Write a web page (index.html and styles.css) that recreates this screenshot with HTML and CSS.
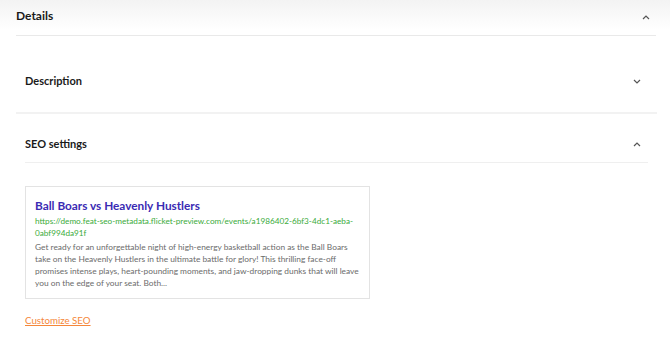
FILE: index.html
```html
<!DOCTYPE html>
<html>
<head>
  <meta charset="utf-8">
  <link rel="stylesheet" href="styles.css">
</head>
<body>
  <div class="top">
    <div class="top-inner">
      <div class="top-title">Details</div>
      <svg class="chev" width="8" height="5" viewBox="0 0 8 5"><path d="M1 4 L4 1 L7 4" fill="none" stroke="#555" stroke-width="1.2"/></svg>
    </div>
  </div>

  <div class="content">
    <div class="section section-desc">
      <div class="section-title">Description</div>
      <svg class="chev" width="8" height="5" viewBox="0 0 8 5"><path d="M1 1 L4 4 L7 1" fill="none" stroke="#555" stroke-width="1.2"/></svg>
    </div>

    <div class="seo">
      <div class="section section-seo">
        <div class="section-title">SEO settings</div>
        <svg class="chev" width="8" height="5" viewBox="0 0 8 5"><path d="M1 4 L4 1 L7 4" fill="none" stroke="#555" stroke-width="1.2"/></svg>
      </div>

      <div class="preview">
        <div class="preview-title">Ball Boars vs Heavenly Hustlers</div>
        <div class="preview-url">https://demo.feat-seo-metadata.flicket-preview.com/events/a1986402-6bf3-4dc1-aeba-0abf994da91f</div>
        <div class="preview-desc">Get ready for an unforgettable night of high-energy basketball action as the Ball Boars take on the Heavenly Hustlers in the ultimate battle for glory! This thrilling face-off promises intense plays, heart-pounding moments, and jaw-dropping dunks that will leave you on the edge of your seat. Both...</div>
      </div>

      <a class="customize" href="#">Customize SEO</a>
    </div>
  </div>
</body>
</html>
```

FILE: styles.css
```css
body {
  margin: 0;
  font-family: Lato, "Noto Sans", sans-serif;
  color: #1a1a1a;
  background: #fff;
}

.top {
  background: linear-gradient(180deg, #f3f3f3 0%, #ffffff 30px);
}

.top-inner {
  display: flex;
  justify-content: space-between;
  align-items: center;
  margin: 0 14px 0 16px;
  height: 36px;
  border-bottom: 1px solid #e9e9e9;
  padding-right: 6px;
  box-sizing: border-box;
}

.top-title {
  font-size: 12px;
  font-weight: 700;
  padding-bottom: 4px;
}

.content {
  margin: 0 13px 0 16px;
}

.section {
  display: flex;
  justify-content: space-between;
  align-items: center;
}

.section-desc {
  padding: 38px 16px 24px 9px;
  border-bottom: 2px solid #f2f2f2;
  line-height: 14px;
}

.seo {
  padding: 0 9px;
}

.section-seo {
  padding: 23px 7px 11px 0;
  border-bottom: 1px solid #efefef;
  line-height: 14px;
}

.section-title {
  font-size: 11px;
  font-weight: 700;
}

.preview {
  width: 345px;
  box-sizing: border-box;
  margin-top: 23px;
  border: 1px solid #e3e3e3;
  padding: 10px 9px 9px 9px;
}

.preview-title {
  font-size: 11.8px;
  font-weight: 700;
  color: #3a2bb3;
  line-height: 17px;
}

.preview-url {
  font-size: 8.2px;
  color: #3aab3a;
  line-height: 11.7px;
  margin-top: 2px;
}

.preview-desc {
  font-size: 8.35px;
  color: #6b6b6b;
  line-height: 11.7px;
  margin-top: 3px;
}

.customize {
  display: inline-block;
  margin-top: 15px;
  font-size: 9.7px;
  color: #f5873a;
  text-decoration: underline;
}
```
